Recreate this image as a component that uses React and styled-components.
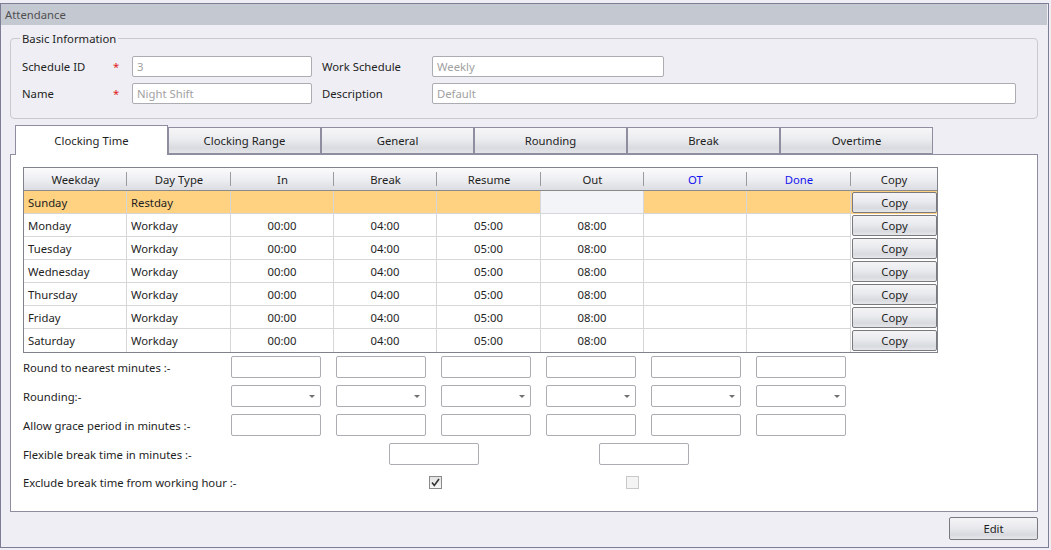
import styled, { createGlobalStyle } from "styled-components";

const GlobalStyle = createGlobalStyle`
  html, body {
    margin: 0;
    padding: 0;
    background: #eeeef4;
  }
  body {
    font-family: "Noto Sans", "Open Sans", sans-serif;
    font-size: 11.3px;
    color: #1e1e1e;
  }
  * {
    box-sizing: border-box;
  }
`;

const Window = styled.div`
  margin-top: 3px;
  width: 1049px;
  height: 545px;
  border: 1px solid #7d7d98;
  background: #eeeef4;
  display: flex;
  flex-direction: column;
`;

const TitleBar = styled.div`
  height: 21px;
  margin-right: 1px;
  padding-left: 4px;
  line-height: 21px;
  background: #c4c8d1;
  color: #505050;
`;

const Body = styled.div`
  padding: 0 10px 0 9px;
  display: flex;
  flex-direction: column;
`;

const Group = styled.fieldset`
  margin: 6px 0 0;
  padding: 10px 0 14px 11px;
  border: 1px solid #c9c9cf;
  border-radius: 4px;
  min-width: 0;
`;

const Legend = styled.legend`
  margin-left: -2px;
  padding: 0 2px;
  color: #1e1e1e;
`;

const InfoGrid = styled.div`
  display: grid;
  grid-template-columns: 91px 19px 180px 10px 110px 584px;
  grid-auto-rows: 21px;
  row-gap: 6px;
  align-items: center;
`;

const Star = styled.span`
  color: #e02020;
`;

const TextBox = styled.input`
  width: ${(p) => p.$w || "100%"};
  height: 21px;
  border: 1px solid #abadb3;
  border-radius: 2px;
  background: #fff;
  padding: 0 4px;
  font: inherit;
  color: #a2a2a2;
  outline: none;
`;

const TabRow = styled.div`
  margin-top: 6px;
  height: 29px;
  padding-left: 5px;
  display: flex;
  align-items: flex-end;
`;

const Tab = styled.div`
  width: 153px;
  height: ${(p) => (p.$active ? "30px" : "27px")};
  margin-bottom: ${(p) => (p.$active ? "-1px" : "0")};
  position: relative;
  z-index: ${(p) => (p.$active ? 1 : 0)};
  border: 1px solid #8e8ea0;
  border-bottom: ${(p) => (p.$active ? "none" : "1px solid #8e8ea0")};
  background: ${(p) =>
    p.$active
      ? "#fff"
      : "linear-gradient(#f6f6f8 0%, #ebecef 45%, #d9dbe0 80%, #e3e5e8 100%)"};
  display: flex;
  align-items: center;
  justify-content: center;
  padding-bottom: ${(p) => (p.$active ? "1px" : "0")};
`;

const Panel = styled.div`
  height: 358px;
  background: #fff;
  border: 1px solid #8e8ea0;
  padding: 12px 0 0 12px;
`;

const Table = styled.div`
  width: 915px;
  border: 1px solid #80838c;
`;

const COLS = "103px 104px 103px 103px 104px 103px 103px 104px 86px";

const Row = styled.div`
  display: grid;
  grid-template-columns: ${COLS};
  height: 23px;
  background: ${(p) => (p.$rest ? "#fed281" : "#fff")};
`;

const HeadRow = styled(Row)`
  background: linear-gradient(#fbfbfc 0%, #eeeff2 50%, #dcdde2 100%);
  border-bottom: 1px solid #8a8a8a;
`;

const HeadCell = styled.div`
  position: relative;
  display: flex;
  align-items: center;
  justify-content: center;
  color: ${(p) => (p.$blue ? "#1414ee" : "#1e1e1e")};

  &:not(:last-child)::after {
    content: "";
    position: absolute;
    right: 0;
    top: 4px;
    bottom: 4px;
    width: 1px;
    background: #9a9aa0;
  }
`;

const Cell = styled.div`
  display: flex;
  align-items: center;
  justify-content: ${(p) => (p.$left ? "flex-start" : "center")};
  padding-left: ${(p) => (p.$left ? "4px" : "0")};
  border-right: 1px solid #d7d7d9;
  border-bottom: ${(p) => (p.$last ? "none" : "1px solid #d7d7d9")};
  background: ${(p) => (p.$grey ? "#f3f4f7" : "transparent")};
`;

const CopyCell = styled.div`
  padding: 1px 0 1px 1px;
`;

const GradButton = styled.button`
  width: ${(p) => p.$w || "100%"};
  height: ${(p) => p.$h || "100%"};
  border: 1px solid #7a7a7e;
  border-radius: 2px;
  background: linear-gradient(#f4f4f6 0%, #e9eaee 45%, #d8dadf 80%, #e6e7ea 100%);
  font: inherit;
  color: #1e1e1e;
  padding: 0;
  cursor: pointer;
`;

const Options = styled.div`
  margin-top: 3px;
  display: grid;
  grid-template-columns: 193px repeat(6, 90px);
  column-gap: 15px;
  row-gap: 7px;
  grid-template-rows: repeat(4, 22px) 20px;
  align-items: center;
`;

const OptLabel = styled.div`
  grid-column: 1;
  white-space: nowrap;
`;

const Field = styled.div`
  height: 22px;
  border: 1px solid #abadb3;
  border-radius: 2px;
  background: #fff;
  display: flex;
  align-items: center;
  justify-content: flex-end;
  padding-right: 5px;
  grid-column: ${(p) => p.$span || "auto"};
  justify-self: ${(p) => (p.$span ? "center" : "stretch")};
  width: ${(p) => (p.$span ? "90px" : "auto")};
`;

const Check = styled.div`
  grid-column: ${(p) => p.$span};
  justify-self: start;
  margin-left: ${(p) => p.$offset}px;
  width: 13px;
  height: 13px;
  border: 1px solid ${(p) => (p.$disabled ? "#c8c8c8" : "#8a8a8a")};
  background: ${(p) =>
    p.$disabled ? "#f4f4f4" : "linear-gradient(#e3e3e3, #f6f6f6)"};
  display: flex;
  align-items: center;
  justify-content: center;
`;

const Footer = styled.div`
  margin-top: 5px;
  display: flex;
  justify-content: flex-end;
`;

const days = [
  "Monday",
  "Tuesday",
  "Wednesday",
  "Thursday",
  "Friday",
  "Saturday",
];

const tabs = [
  "Clocking Time",
  "Clocking Range",
  "General",
  "Rounding",
  "Break",
  "Overtime",
];

function Arrow() {
  return (
    <svg width="6" height="3" viewBox="0 0 6 3">
      <path d="M0 0h6L3 3z" fill="#707070" />
    </svg>
  );
}

export default function App() {
  return (
    <>
      <GlobalStyle />
      <Window>
        <TitleBar>Attendance</TitleBar>
        <Body>
          <Group>
            <Legend>Basic Information</Legend>
            <InfoGrid>
              <span>Schedule ID</span>
              <Star>*</Star>
              <TextBox readOnly value="3" />
              <span />
              <span>Work Schedule</span>
              <TextBox readOnly value="Weekly" $w="232px" />
              <span>Name</span>
              <Star>*</Star>
              <TextBox readOnly value="Night Shift" />
              <span />
              <span>Description</span>
              <TextBox readOnly value="Default" />
            </InfoGrid>
          </Group>

          <TabRow>
            {tabs.map((t, i) => (
              <Tab key={t} $active={i === 0}>
                {t}
              </Tab>
            ))}
          </TabRow>

          <Panel>
            <Table>
              <HeadRow>
                <HeadCell>Weekday</HeadCell>
                <HeadCell>Day Type</HeadCell>
                <HeadCell>In</HeadCell>
                <HeadCell>Break</HeadCell>
                <HeadCell>Resume</HeadCell>
                <HeadCell>Out</HeadCell>
                <HeadCell $blue>OT</HeadCell>
                <HeadCell $blue>Done</HeadCell>
                <HeadCell>Copy</HeadCell>
              </HeadRow>
              <Row $rest>
                <Cell $left>Sunday</Cell>
                <Cell $left>Restday</Cell>
                <Cell />
                <Cell />
                <Cell />
                <Cell $grey />
                <Cell />
                <Cell />
                <CopyCell>
                  <GradButton>Copy</GradButton>
                </CopyCell>
              </Row>
              {days.map((d, i) => {
                const last = i === days.length - 1;
                return (
                  <Row key={d}>
                    <Cell $left $last={last}>
                      {d}
                    </Cell>
                    <Cell $left $last={last}>
                      Workday
                    </Cell>
                    <Cell $last={last}>00:00</Cell>
                    <Cell $last={last}>04:00</Cell>
                    <Cell $last={last}>05:00</Cell>
                    <Cell $last={last}>08:00</Cell>
                    <Cell $last={last} />
                    <Cell $last={last} />
                    <CopyCell>
                      <GradButton>Copy</GradButton>
                    </CopyCell>
                  </Row>
                );
              })}
            </Table>

            <Options>
              <OptLabel>Round to nearest minutes :-</OptLabel>
              {[0, 1, 2, 3, 4, 5].map((k) => (
                <Field key={k} />
              ))}
              <OptLabel>Rounding:-</OptLabel>
              {[0, 1, 2, 3, 4, 5].map((k) => (
                <Field key={k}>
                  <Arrow />
                </Field>
              ))}
              <OptLabel>Allow grace period in minutes :-</OptLabel>
              {[0, 1, 2, 3, 4, 5].map((k) => (
                <Field key={k} />
              ))}
              <OptLabel>Flexible break time in minutes :-</OptLabel>
              <Field $span="3 / 5" />
              <Field $span="5 / 7" />
              <OptLabel>Exclude break time from working hour :-</OptLabel>
              <Check $span="3 / 5" $offset={93}>
                <svg width="9" height="9" viewBox="0 0 9 9">
                  <path
                    d="M1 4.5l2.3 3L8 1"
                    fill="none"
                    stroke="#333"
                    strokeWidth="1.6"
                  />
                </svg>
              </Check>
              <Check $span="5 / 7" $offset={80} $disabled />
            </Options>
          </Panel>

          <Footer>
            <GradButton $w="89px" $h="23px">
              Edit
            </GradButton>
          </Footer>
        </Body>
      </Window>
    </>
  );
}
